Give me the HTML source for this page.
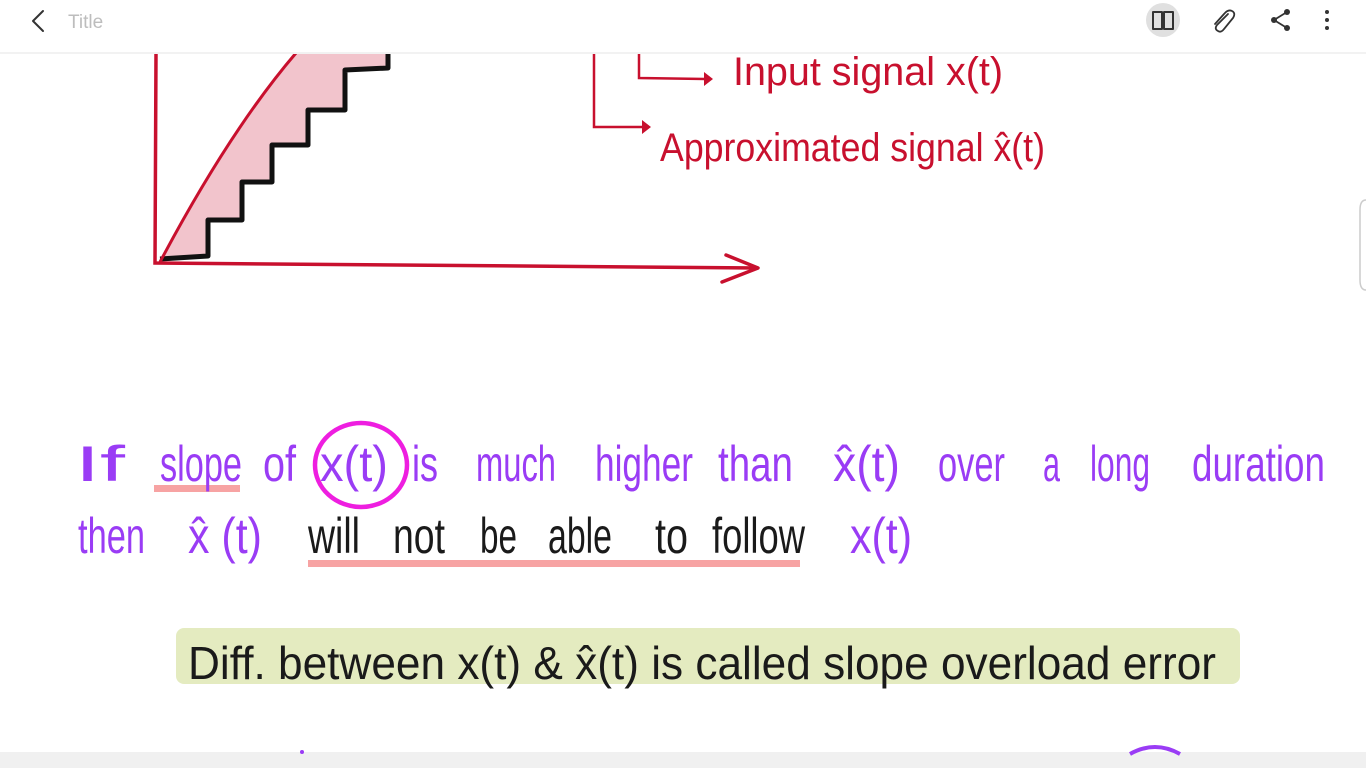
<!DOCTYPE html>
<html><head><meta charset="utf-8"><style>
html,body{margin:0;padding:0;width:1366px;height:768px;overflow:hidden;background:#fff;}
svg{display:block}
text{font-family:"Liberation Sans",sans-serif;}
</style></head><body>
<svg width="1366" height="768" viewBox="0 0 1366 768" xmlns="http://www.w3.org/2000/svg">
<rect width="1366" height="768" fill="#fff"/>
<path d="M160,262 Q230,130 296,53 L388,53 L388,68 L345,70 L345,110 L308,110 L308,145 L272,145 L272,182 L242,182 L242,220 L208,220 L208,256 Z" fill="#f2c4cc"/>
<path d="M160,259 L208,256 L208,220 L242,220 L242,182 L272,182 L272,145 L308,145 L308,110 L345,110 L345,70 L388,68 L388,53" fill="none" stroke="#111" stroke-width="5" stroke-linejoin="round"/>
<path d="M160,262 Q230,130 296,53" fill="none" stroke="#c8102e" stroke-width="3"/>
<path d="M156,53 L155,263 L758,268" fill="none" stroke="#c8102e" stroke-width="3.5"/>
<path d="M726,255 L758,268 L722,282" fill="none" stroke="#c8102e" stroke-width="3.5" stroke-linecap="round" stroke-linejoin="round"/>
<path d="M594,53 L594,127 L642,127" fill="none" stroke="#c8102e" stroke-width="2.5"/>
<path d="M642,120 L651,127 L642,134 Z" fill="#c8102e"/>
<path d="M639,53 L639,78 L705,79" fill="none" stroke="#c8102e" stroke-width="2.5"/>
<path d="M704,72 L713,79 L704,86 Z" fill="#c8102e"/>
<g fill="#c8102e" font-size="40">
<text x="733" y="85" textLength="270" lengthAdjust="spacingAndGlyphs">Input  signal  x(t)</text>
<text x="660" y="161" textLength="385" lengthAdjust="spacingAndGlyphs">Approximated  signal  x̂(t)</text>
</g>
<rect x="154" y="485" width="86" height="7" fill="#f7a3a3"/>
<rect x="308" y="560" width="492" height="7" fill="#f7a3a3"/>
<g fill="#9a3cf5" font-size="50">
<text x="75" y="481" textLength="50" lengthAdjust="spacingAndGlyphs"> If</text>
<text x="160" y="481" textLength="82" lengthAdjust="spacingAndGlyphs">slope</text>
<text x="263" y="481" textLength="33" lengthAdjust="spacingAndGlyphs">of</text>
<text x="320" y="481" textLength="68" lengthAdjust="spacingAndGlyphs">x(t)</text>
<text x="412" y="481" textLength="26" lengthAdjust="spacingAndGlyphs">is</text>
<text x="476" y="481" textLength="80" lengthAdjust="spacingAndGlyphs">much</text>
<text x="595" y="481" textLength="98" lengthAdjust="spacingAndGlyphs">higher</text>
<text x="718" y="481" textLength="75" lengthAdjust="spacingAndGlyphs">than</text>
<text x="833" y="481" textLength="67" lengthAdjust="spacingAndGlyphs">x̂(t)</text>
<text x="938" y="481" textLength="67" lengthAdjust="spacingAndGlyphs">over</text>
<text x="1043" y="481" textLength="17" lengthAdjust="spacingAndGlyphs">a</text>
<text x="1090" y="481" textLength="60" lengthAdjust="spacingAndGlyphs">long</text>
<text x="1192" y="481" textLength="133" lengthAdjust="spacingAndGlyphs">duration</text>
<text x="78" y="553" textLength="67" lengthAdjust="spacingAndGlyphs">then</text>
<text x="188" y="553" textLength="74" lengthAdjust="spacingAndGlyphs">x̂ (t)</text>
<text x="850" y="553" textLength="62" lengthAdjust="spacingAndGlyphs">x(t)</text>
</g>
<g fill="#1a1a1a" font-size="50">
<text x="308" y="553" textLength="52" lengthAdjust="spacingAndGlyphs">will</text>
<text x="393" y="553" textLength="52" lengthAdjust="spacingAndGlyphs">not</text>
<text x="480" y="553" textLength="37" lengthAdjust="spacingAndGlyphs">be</text>
<text x="548" y="553" textLength="64" lengthAdjust="spacingAndGlyphs">able</text>
<text x="655" y="553" textLength="33" lengthAdjust="spacingAndGlyphs">to</text>
<text x="712" y="553" textLength="93" lengthAdjust="spacingAndGlyphs">follow</text>
</g>
<ellipse cx="361" cy="465" rx="46" ry="42" fill="none" stroke="#ee1ee0" stroke-width="4.5"/>
<rect x="176" y="628" width="1064" height="56" rx="8" fill="#e4ebc0"/>
<text x="188" y="679" font-size="46" fill="#1a1a1a" textLength="1028" lengthAdjust="spacingAndGlyphs">Diff. between   x(t) &amp; x̂(t)  is  called  slope  overload  error</text>
<rect x="0" y="752" width="1366" height="16" fill="#f0f0f0"/>
<path d="M1130,754 Q1155,740 1180,754" fill="none" stroke="#9a3cf5" stroke-width="4"/>
<circle cx="302" cy="752" r="2" fill="#9a3cf5"/>
<path d="M1366,200 Q1360,200 1360,210 L1360,280 Q1360,290 1366,290" fill="none" stroke="#ccc" stroke-width="1.5"/>
<rect x="0" y="0" width="1366" height="52" fill="#fff"/>
<rect x="0" y="52" width="1366" height="2" fill="#f2f2f2"/>
<path d="M43,11 L33,21 L43,31" fill="none" stroke="#333" stroke-width="2" stroke-linecap="round" stroke-linejoin="round"/>
<text x="68" y="28" font-size="19" fill="#bdbdbd">Title</text>
<circle cx="1163" cy="20" r="17" fill="#e0e0e0"/>
<path d="M1153,12 L1162,12 L1162,29 L1153,29 Z M1164,12 L1173,12 L1173,29 L1164,29 Z" fill="none" stroke="#333" stroke-width="2" stroke-linejoin="round"/>
<path d="M1228,14 L1217,25 Q1214,29 1218,31 Q1221,33 1224,29 L1233,18 Q1236,13 1232,11 Q1228,9 1224,14 L1215,24" fill="none" stroke="#333" stroke-width="1.8" stroke-linecap="round"/>
<circle cx="1287" cy="12" r="3" fill="#333"/><circle cx="1274" cy="20" r="3" fill="#333"/><circle cx="1287" cy="28" r="3" fill="#333"/>
<path d="M1287,12 L1274,20 L1287,28" fill="none" stroke="#333" stroke-width="1.8"/>
<circle cx="1327" cy="12" r="2" fill="#333"/><circle cx="1327" cy="20" r="2" fill="#333"/><circle cx="1327" cy="28" r="2" fill="#333"/>
</svg>
</body></html>
